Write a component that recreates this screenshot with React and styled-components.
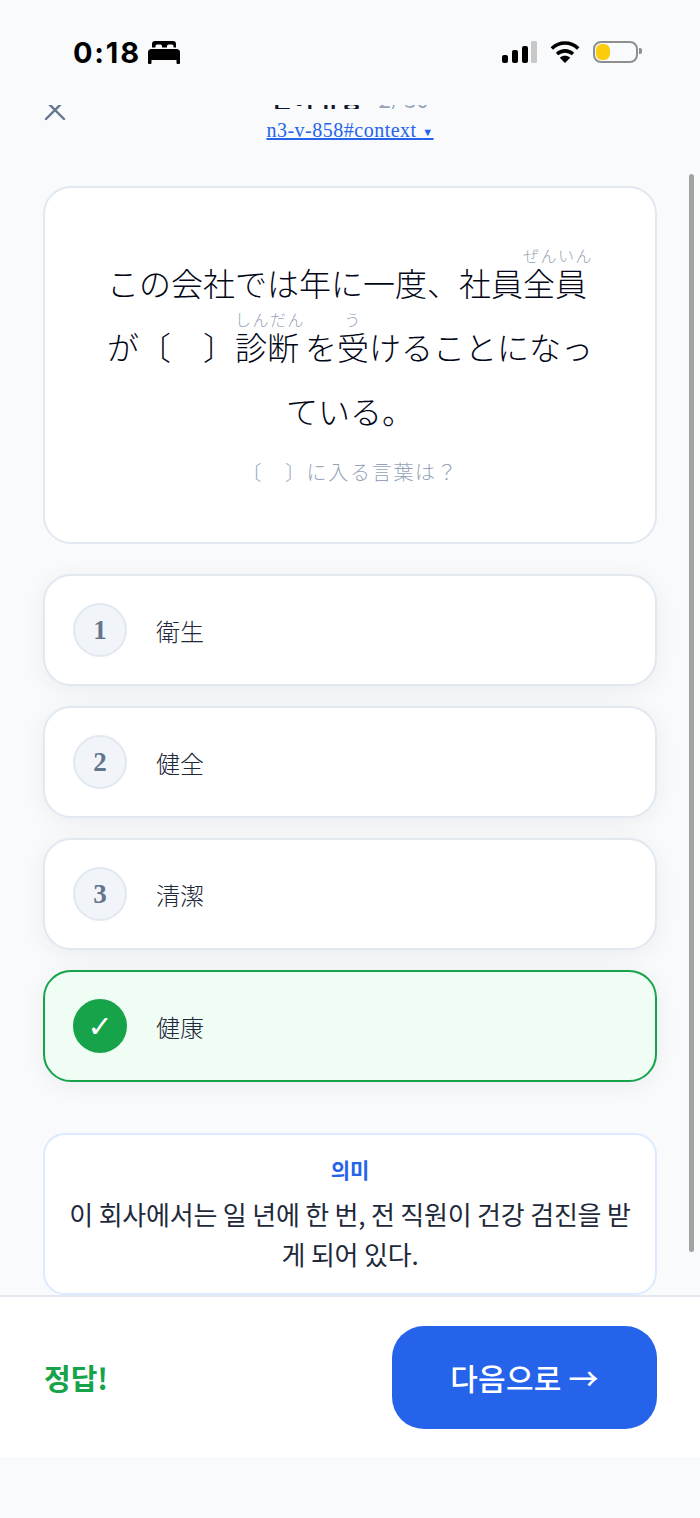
import React from "react";
import styled, { createGlobalStyle } from "styled-components";

const SERIF = `"Liberation Serif", "Noto Sans CJK JP", serif`;
const KR = `"Noto Sans CJK KR", "Noto Sans", sans-serif`;

const GlobalStyle = createGlobalStyle`
  html, body {
    margin: 0;
    padding: 0;
    background: #f8fafc;
  }
  * {
    box-sizing: border-box;
  }
`;

const OPTIONS = [
  { id: 1, label: "衛生" },
  { id: 2, label: "健全" },
  { id: 3, label: "清潔" },
  { id: 4, label: "健康", correct: true },
];

const BedIcon = () => (
  <svg width="32" height="23" viewBox="0 0 32 23" fill="#000">
    <path d="M4 6.500V3a3 3 0 0 1 3-3h18a3 3 0 0 1 3 3v3.500h-2.500V5a1.600 1.600 0 0 0-1.600-1.600h-3.300A1.600 1.600 0 0 0 19 5v1.500h-5V5a1.600 1.600 0 0 0-1.600-1.600H9.100A1.600 1.600 0 0 0 7.500 5v1.500z" />
    <path d="M3.500 8h25A3.500 3.500 0 0 1 32 11.500V19H0v-7.500A3.500 3.500 0 0 1 3.500 8z" />
    <rect x="0" y="18.500" width="3.500" height="4.500" rx="1" />
    <rect x="28.500" y="18.500" width="3.500" height="4.500" rx="1" />
  </svg>
);

const SignalIcon = () => (
  <svg width="35" height="22" viewBox="0 0 35 22">
    <rect x="0" y="14" width="6" height="8" rx="2" fill="#000" />
    <rect x="10" y="9" width="6" height="13" rx="2" fill="#000" />
    <rect x="20" y="5" width="6" height="17" rx="2" fill="#000" />
    <rect x="29" y="0" width="6" height="22" rx="1.500" fill="#c8c8c8" />
  </svg>
);

const WifiIcon = () => (
  <svg width="30" height="22" viewBox="0 0 30 22" fill="none" stroke="#000" strokeWidth="3.600">
    <path d="M1.800 7.500C9.500 0.200 20.500 0.200 28.200 7.500" />
    <path d="M7 13C11.800 8.800 18.200 8.800 23 13" />
    <path d="M15 22L9.800 16.800C13 14.200 17 14.200 20.200 16.800Z" fill="#000" stroke="none" />
  </svg>
);

const CloseIcon = () => (
  <svg width="22" height="22" viewBox="0 0 22 22" stroke="#64748b" strokeWidth="2.400" strokeLinecap="round">
    <path d="M2 2L20 20M20 2L2 20" />
  </svg>
);

const App = () => {
  return (
    <>
      <GlobalStyle />
      <Page>
        <StatusBar>
          <StatusLeft>
            <Clock>0:18</Clock>
            <BedIcon />
          </StatusLeft>
          <StatusRight>
            <SignalIcon />
            <WifiIcon />
            <Battery>
              <BatteryFill />
            </Battery>
          </StatusRight>
        </StatusBar>

        <Content>
          <Header>
            <CloseSlot>
              <CloseIcon />
            </CloseSlot>
            <TitleClip>
              <Title>
                단어 유형 <Count>2/ 30</Count>
              </Title>
            </TitleClip>
            <SourceLink>
              n3-v-858#context <Caret>▼</Caret>
            </SourceLink>
          </Header>

          <QuestionCard>
            <Sentence>
              この会社では年に一度、社員
              <Reading>
                全員<rt>ぜんいん</rt>
              </Reading>
              が〔　〕
              <Reading $wide>
                診断<rt>しんだん</rt>
              </Reading>
              を
              <Reading $single>
                受<rt>う</rt>
              </Reading>
              けることになっている。
            </Sentence>
            <Hint>〔　〕に入る言葉は？</Hint>
          </QuestionCard>

          <OptionList>
            {OPTIONS.map((option) => (
              <Option key={option.id} $correct={option.correct}>
                <OptionBadge $correct={option.correct}>{option.correct ? "✓" : option.id}</OptionBadge>
                <OptionLabel>{option.label}</OptionLabel>
              </Option>
            ))}
          </OptionList>

          <MeaningCard>
            <MeaningLabel>의미</MeaningLabel>
            <MeaningText>이 회사에서는 일 년에 한 번, 전 직원이 건강 검진을 받게 되어 있다.</MeaningText>
          </MeaningCard>
        </Content>

        <Footer>
          <Result>정답!</Result>
          <NextButton>다음으로 →</NextButton>
        </Footer>

        <Scrollbar />
      </Page>
    </>
  );
};

const Page = styled.div`
  position: relative;
  display: flex;
  flex-direction: column;
  width: 700px;
  height: 1518px;
  overflow: hidden;
  background: #f8fafc;
`;

const StatusBar = styled.div`
  display: flex;
  justify-content: space-between;
  align-items: flex-start;
  height: 105px;
  padding: 41px 62px 0 73px;
  flex-shrink: 0;
`;

const StatusLeft = styled.div`
  display: flex;
  align-items: center;
  gap: 7px;
  height: 22px;
`;

const Clock = styled.span`
  font-family: Inter, "Liberation Sans", sans-serif;
  font-size: 29px;
  font-weight: 700;
  letter-spacing: 1.800px;
  color: #000;
`;

const StatusRight = styled.div`
  display: flex;
  align-items: center;
  gap: 13px;
`;

const Battery = styled.div`
  position: relative;
  width: 45px;
  height: 22px;
  padding: 1px;
  border: 2px solid #8e8e8e;
  border-radius: 8px;

  &::after {
    content: "";
    position: absolute;
    top: 5px;
    right: -6px;
    width: 3px;
    height: 6px;
    border-radius: 0 2px 2px 0;
    background: #8e8e8e;
  }
`;

const BatteryFill = styled.div`
  width: 14px;
  height: 100%;
  border-radius: 6px;
  background: #fbcc0c;
`;

const Content = styled.div`
  flex: 1;
  min-height: 0;
  overflow: hidden;
  display: flex;
  flex-direction: column;
  padding: 0 43px;
`;

const Header = styled.div`
  position: relative;
  display: flex;
  flex-direction: column;
  align-items: center;
  height: 81px;
  flex-shrink: 0;
`;

const CloseSlot = styled.div`
  position: absolute;
  top: -6px;
  left: 1px;
  line-height: 0;
`;

const TitleClip = styled.div`
  display: flex;
  align-items: flex-end;
  justify-content: center;
  height: 4px;
  overflow: hidden;
`;

const Title = styled.div`
  font-family: ${KR};
  font-size: 23px;
  font-weight: 700;
  line-height: 30px;
  margin-bottom: -4px;
  color: #0f172a;
  white-space: nowrap;
`;

const Count = styled.span`
  margin-left: 12px;
  font-size: 22px;
  font-weight: 400;
  color: #94a3b8;
`;

const SourceLink = styled.a`
  margin-top: 10px;
  font-family: ${SERIF};
  font-size: 20px;
  line-height: 22px;
  letter-spacing: 0.500px;
  color: #2563eb;
  text-decoration: underline;
`;

const Caret = styled.span`
  font-size: 11px;
  vertical-align: 1px;
`;

const QuestionCard = styled.div`
  display: flex;
  flex-direction: column;
  align-items: center;
  height: 358px;
  padding: 63px 50px 0;
  background: #fff;
  border: 2px solid #e2e8f0;
  border-radius: 28px;
  flex-shrink: 0;
`;

const Sentence = styled.div`
  font-family: ${SERIF};
  font-size: 32px;
  font-weight: 300;
  line-height: 64px;
  color: #020617;
  text-align: center;
`;

const Reading = styled.ruby`
  ruby-align: ${(props) => (props.$single ? "center" : "start")};
  margin-right: ${(props) => (props.$wide ? "6px" : "0")};

  rt {
    position: relative;
    top: -3px;
    font-size: 16px;
    letter-spacing: 1.500px;
    color: #94a3b8;
    text-align: ${(props) => (props.$single ? "center" : "left")};
  }
`;

const Hint = styled.div`
  margin-top: 13px;
  font-family: ${SERIF};
  font-size: 20px;
  font-weight: 300;
  line-height: 30px;
  letter-spacing: 1.700px;
  color: #94a3b8;
`;

const OptionList = styled.div`
  display: flex;
  flex-direction: column;
  gap: 20px;
  margin-top: 30px;
  flex-shrink: 0;
`;

const Option = styled.div`
  display: flex;
  align-items: center;
  gap: 29px;
  height: 112px;
  padding: 0 28px;
  background: ${(props) => (props.$correct ? "#f0fdf4" : "#fff")};
  border: 2px solid ${(props) => (props.$correct ? "#16a34a" : "#e2e8f0")};
  border-radius: 28px;
  box-shadow: 0 4px 24px rgba(15, 23, 42, 0.06);
`;

const OptionBadge = styled.div`
  display: flex;
  align-items: center;
  justify-content: center;
  width: 54px;
  height: 54px;
  border-radius: 50%;
  font-family: ${(props) => (props.$correct ? `"DejaVu Sans", sans-serif` : SERIF)};
  font-size: ${(props) => (props.$correct ? "30px" : "27px")};
  font-weight: 700;
  color: ${(props) => (props.$correct ? "#fff" : "#64748b")};
  background: ${(props) => (props.$correct ? "#16a34a" : "#f1f5f9")};
  border: 2px solid ${(props) => (props.$correct ? "#16a34a" : "#e2e8f0")};
`;

const OptionLabel = styled.div`
  font-family: ${SERIF};
  font-size: 24px;
  font-weight: 300;
  color: #1e293b;
`;

const MeaningCard = styled.div`
  margin-top: 51px;
  padding: 19px 20px 0;
  height: 162px;
  background: #fff;
  border: 2px solid #dbeafe;
  border-radius: 22px;
  text-align: center;
  flex-shrink: 0;
`;

const MeaningLabel = styled.div`
  font-family: ${KR};
  font-size: 21px;
  font-weight: 700;
  line-height: 30px;
  color: #2563eb;
`;

const MeaningText = styled.div`
  margin-top: 10px;
  font-family: ${KR};
  font-size: 26px;
  line-height: 40px;
  letter-spacing: -0.200px;
  color: #1e293b;
`;

const Footer = styled.div`
  display: flex;
  align-items: center;
  justify-content: space-between;
  height: 162px;
  margin-bottom: 61px;
  padding: 0 43px 0 44px;
  background: #fff;
  border-top: 2px solid #e2e8f0;
  flex-shrink: 0;
`;

const Result = styled.div`
  font-family: ${KR};
  font-size: 29px;
  font-weight: 700;
  color: #16a34a;
`;

const NextButton = styled.button`
  width: 265px;
  height: 103px;
  border: none;
  border-radius: 32px;
  background: #2563eb;
  font-family: ${KR};
  font-size: 30px;
  font-weight: 500;
  letter-spacing: 0.200px;
  color: #fff;
`;

const Scrollbar = styled.div`
  position: absolute;
  top: 174px;
  left: 689px;
  width: 5px;
  height: 1078px;
  border-radius: 3px;
  background: #a3a3a3;
`;

export default App;
